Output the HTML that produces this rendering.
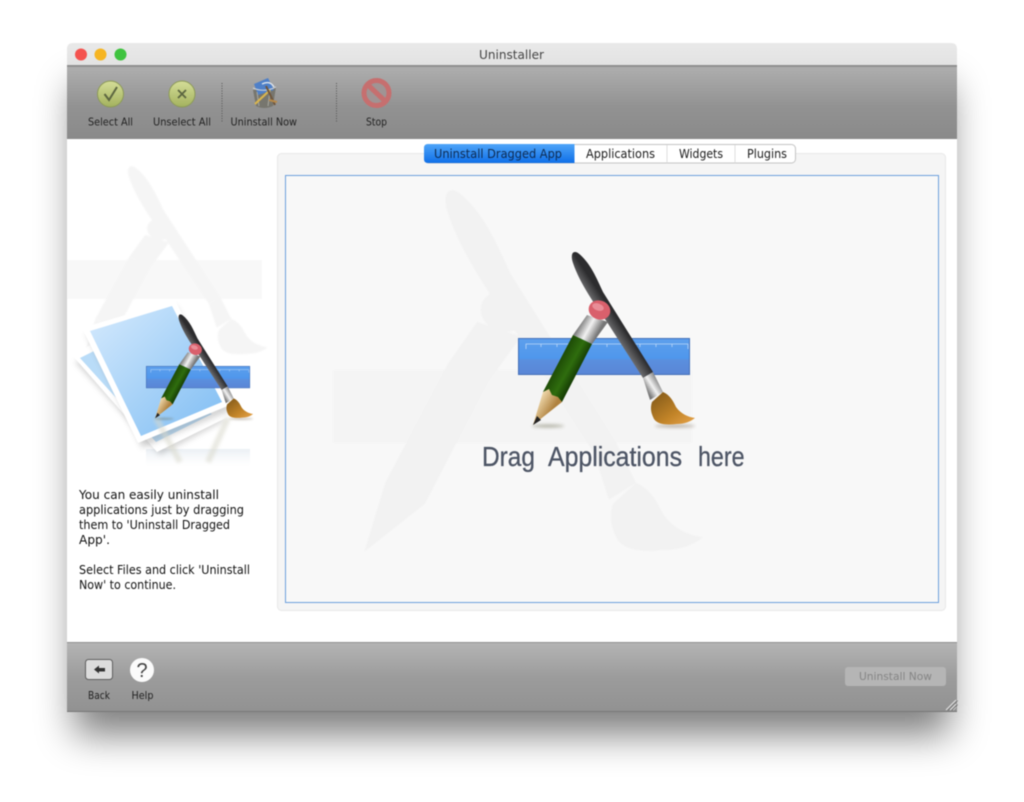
<!DOCTYPE html>
<html>
<head>
<meta charset="utf-8">
<title>Uninstaller</title>
<style>
html,body{margin:0;padding:0;background:#fff;width:1024px;height:802px;overflow:hidden}
svg{display:block;filter:blur(.4px)}
text{font-family:"DejaVu Sans","Liberation Sans",sans-serif}
</style>
</head>
<body>
<svg width="1024" height="802" viewBox="0 0 1024 802" xmlns="http://www.w3.org/2000/svg">
<defs>
  <filter id="sh" x="-20%" y="-20%" width="140%" height="140%"><feGaussianBlur stdDeviation="19"/></filter>
  <filter id="soft" x="-50%" y="-200%" width="200%" height="500%"><feGaussianBlur stdDeviation="1.600"/></filter>
  <filter id="soft3" x="-30%" y="-30%" width="160%" height="160%"><feGaussianBlur stdDeviation="3"/></filter>
  <filter id="g1" x="-10%" y="-10%" width="120%" height="120%"><feGaussianBlur stdDeviation=".8"/></filter>
  <linearGradient id="tb" x1="0" y1="0" x2="0" y2="1"><stop offset="0" stop-color="#e9e9e9"/><stop offset="1" stop-color="#cdcdcd"/></linearGradient>
  <linearGradient id="tool" x1="0" y1="0" x2="0" y2="1"><stop offset="0" stop-color="#aeaeae"/><stop offset=".55" stop-color="#929292"/><stop offset="1" stop-color="#8a8a8a"/></linearGradient>
  <linearGradient id="bot" x1="0" y1="0" x2="0" y2="1"><stop offset="0" stop-color="#b4b4b4"/><stop offset=".5" stop-color="#9c9c9c"/><stop offset="1" stop-color="#929292"/></linearGradient>
  <linearGradient id="sel" x1="0" y1="0" x2="0" y2="1"><stop offset="0" stop-color="#4fa5f8"/><stop offset="1" stop-color="#0f6fe8"/></linearGradient>
  <linearGradient id="grn" x1="0" y1="0" x2="0" y2="1"><stop offset="0" stop-color="#d5dd98"/><stop offset="1" stop-color="#a3b25e"/></linearGradient>
  <linearGradient id="rul" x1="0" y1="0" x2="0" y2="1"><stop offset="0" stop-color="#5d9fec"/><stop offset=".55" stop-color="#4f97ec"/><stop offset=".6" stop-color="#5a8fde"/><stop offset="1" stop-color="#5a86d6"/></linearGradient>
  <linearGradient id="hand" gradientUnits="userSpaceOnUse" x1="592" y1="320" x2="610" y2="308"><stop offset="0" stop-color="#303032"/><stop offset=".45" stop-color="#707072"/><stop offset="1" stop-color="#2c2c2e"/></linearGradient>
  <linearGradient id="silv1" gradientUnits="userSpaceOnUse" x1="646" y1="390" x2="660" y2="381"><stop offset="0" stop-color="#777"/><stop offset=".45" stop-color="#f2f2f2"/><stop offset="1" stop-color="#777"/></linearGradient>
  <linearGradient id="silv2" gradientUnits="userSpaceOnUse" x1="580" y1="323" x2="598" y2="333"><stop offset="0" stop-color="#777"/><stop offset=".5" stop-color="#f2f2f2"/><stop offset="1" stop-color="#777"/></linearGradient>
  <linearGradient id="hair" x1="0" y1="0" x2="1" y2="1"><stop offset="0" stop-color="#7d5618"/><stop offset=".6" stop-color="#c28428"/><stop offset="1" stop-color="#e8a44a"/></linearGradient>
  <linearGradient id="pen" gradientUnits="userSpaceOnUse" x1="558" y1="362" x2="578" y2="373"><stop offset="0" stop-color="#1d4a06"/><stop offset=".55" stop-color="#2f6d0e"/><stop offset="1" stop-color="#143a03"/></linearGradient>
  <linearGradient id="wood" gradientUnits="userSpaceOnUse" x1="536" y1="400" x2="552" y2="410"><stop offset="0" stop-color="#f6e2b8"/><stop offset="1" stop-color="#b0823f"/></linearGradient>
  <linearGradient id="paper" x1="0" y1="0" x2="1" y2="1"><stop offset="0" stop-color="#d5eafd"/><stop offset="1" stop-color="#7fbdf3"/></linearGradient>
  <linearGradient id="fade" x1="0" y1="0" x2="0" y2="1"><stop offset="0" stop-color="#e6ecf2" stop-opacity=".8"/><stop offset="1" stop-color="#f2f5f8" stop-opacity="0"/></linearGradient>

  <g id="shapes">
    <path d="M573,263C570,254 573,250 578,253C590,262 597,279 603,292L653,372L643,378L607,322C596,306 580,284 573,263Z"/>
    <path d="M643,378L653,372L663,392L650,400Z"/>
    <path d="M652,402L663,392C670,395 673,401 676,407C681,414 688,417 695,418C690,422 684,424 677,424C668,425 658,425 654,419C651,413 650,408 652,402Z"/>
    <path d="M587,315L608,322L592,344L573,335Z"/>
    <ellipse cx="599.500" cy="310" rx="11" ry="9.500" transform="rotate(20 599.500 310)"/>
    <path d="M573,335L592,344L562,402L543,392Z"/>
    <path d="M543,392L562,402L538,421L533,425Z"/>
  </g>

  <g id="icon">
    <rect x="518.500" y="338.500" width="171" height="36" fill="url(#rul)" stroke="#4470b8" stroke-width="1"/>
    <path d="M526,349V344H688V349M541,344v3M557,344v3M574,344v3M590,344v3M607,344v3M623,344v3M640,344v3M656,344v3M672,344v3" fill="none" stroke="#bcd8f8" stroke-width=".8"/>
    <ellipse cx="548" cy="426" rx="16" ry="1.500" fill="#6a6a50" opacity=".5" filter="url(#soft)"/>
    <ellipse cx="675" cy="426" rx="20" ry="1.500" fill="#6a5a40" opacity=".45" filter="url(#soft)"/>
    <path d="M573,263C570,254 573,250 578,253C590,262 597,279 603,292L653,372L643,378L607,322C596,306 580,284 573,263Z" fill="url(#hand)"/>
    <path d="M643,378L653,372L663,392L650,400Z" fill="url(#silv1)"/>
    <path d="M652,402L663,392C670,395 673,401 676,407C681,414 688,417 695,418C690,422 684,424 677,424C668,425 658,425 654,419C651,413 650,408 652,402Z" fill="url(#hair)"/>
    <path d="M587,315L608,322L592,344L573,335Z" fill="url(#silv2)"/>
    <path d="M573,335L592,344L562,402L543,392Z" fill="url(#pen)"/>
    <path d="M543,392L549,389L552,395L558,397L562,402L538,421L533,425Z" fill="url(#wood)"/>
    <path d="M537,416L541,420L533,425Z" fill="#222"/>
    <ellipse cx="599.500" cy="310" rx="11" ry="9.500" transform="rotate(20 599.500 310)" fill="#d9606c"/>
    <ellipse cx="598" cy="307" rx="6" ry="3.500" transform="rotate(20 598 307)" fill="#e98d97"/>
  </g>
</defs>

<!-- window shadow -->
<rect x="74" y="85" width="876" height="650" fill="#000" opacity=".5" filter="url(#sh)"/>

<!-- window -->
<path d="M67,139V49Q67,43 73,43H951Q957,43 957,49V139Z" fill="url(#tb)"/>
<rect x="67" y="65" width="890" height="2" fill="#8f8f8f"/>
<rect x="67" y="67" width="890" height="72" fill="url(#tool)"/>
<rect x="67" y="139" width="890" height="504" fill="#fff"/>
<rect x="67" y="642" width="890" height="1" fill="#909090"/>
<rect x="67" y="643" width="890" height="68" fill="url(#bot)"/>
<rect x="67" y="711" width="890" height="1" fill="#777"/>

<!-- traffic lights -->
<circle cx="81" cy="54.500" r="6" fill="#f4534f"/>
<circle cx="100.500" cy="54.500" r="6" fill="#f6b522"/>
<circle cx="120.500" cy="54.500" r="6" fill="#3fc33f"/>
<text x="479" y="59" font-size="12.500" fill="#444" textLength="65" lengthAdjust="spacingAndGlyphs">Uninstaller</text>

<!-- toolbar icons -->
<circle cx="110.500" cy="94" r="13" fill="url(#grn)" stroke="#8c9a58" stroke-width="1"/>
<path d="M104.500,94L109,100L117,87" fill="none" stroke="#5c6640" stroke-width="2"/>
<circle cx="182" cy="94" r="13" fill="url(#grn)" stroke="#8c9a58" stroke-width="1"/>
<path d="M178,90L186,98M186,90L178,98" fill="none" stroke="#5c6640" stroke-width="1.800"/>
<line x1="222" y1="83" x2="222" y2="122" stroke="#555" stroke-width="1" stroke-dasharray="1 1.500"/>
<line x1="336.500" y1="83" x2="336.500" y2="122" stroke="#555" stroke-width="1" stroke-dasharray="1 1.500"/>
<!-- trash -->
<path d="M253,90L276,87L273,106Q264,110 256,106Z" fill="#77766e"/>
<path d="M254,84L268,78L274,90L258,95Z" fill="#4f80c8"/>
<path d="M262,84Q270,80 274,87" fill="none" stroke="#dfe6ee" stroke-width="1.400"/>
<path d="M253,88Q264,93 276,87" fill="none" stroke="#cfd4da" stroke-width="1"/>
<path d="M257,92L259,106M270,91L268,106" stroke="#a8a8a0" stroke-width="1"/>
<path d="M255,104L270,90" stroke="#d9b54e" stroke-width="2.200"/>
<path d="M266,86L275,105" stroke="#70563c" stroke-width="2"/>
<path d="M269,100L277,102" stroke="#b88a4a" stroke-width="2"/>
<!-- stop -->
<circle cx="376.500" cy="93" r="12.500" fill="#a09494" stroke="#c66f6f" stroke-width="5"/>
<path d="M367,84L386,102" stroke="#c66f6f" stroke-width="5"/>

<g fill="#222" font-size="10.500">
<text x="88" y="125.500" textLength="45" lengthAdjust="spacingAndGlyphs">Select All</text>
<text x="153" y="125.500" textLength="58" lengthAdjust="spacingAndGlyphs">Unselect All</text>
<text x="230.500" y="125.500" textLength="66.500" lengthAdjust="spacingAndGlyphs">Uninstall Now</text>
<text x="366" y="125.500" textLength="21" lengthAdjust="spacingAndGlyphs">Stop</text>
</g>

<!-- left ghost -->
<clipPath id="cl"><rect x="67" y="139" width="205" height="300"/></clipPath>
<g clip-path="url(#cl)" filter="url(#g1)">
  <rect x="67" y="260" width="195" height="39" fill="#f8f8f8"/>
  <g transform="translate(67 260) scale(1.134 1.09) translate(-518 -338)" fill="#f5f5f5"><use href="#shapes"/></g>
</g>

<!-- left paper icon -->
<rect x="146" y="449" width="104" height="17" fill="url(#fade)"/>
<path d="M75,362L103,347L226,420L160,455Z" fill="#888" opacity=".35" filter="url(#soft3)"/>
<path d="M72,355L100,340L228,417L157,452Z" fill="#fff"/>
<path d="M80,358L104,346L212,414L156,442Z" fill="#b9dcf8"/>
<path d="M86,334L176,306L232,410L142,448Z" fill="#777" opacity=".3" filter="url(#soft3)"/>
<path d="M82,328L175,300L230,405L138,443Z" fill="#fff"/>
<path d="M90,331L172,306L222,402L141,436Z" fill="url(#paper)"/>
<path d="M156,418L180,462M228,418L208,462" stroke="#d9d9cc" stroke-width="6" opacity=".55" filter="url(#soft)"/>
<g transform="translate(146 366) scale(.605 .6) translate(-518 -338)"><use href="#icon"/></g>

<!-- left text -->
<g fill="#111" font-size="12">
<text x="79" y="499" textLength="140" lengthAdjust="spacingAndGlyphs">You can easily uninstall</text>
<text x="79" y="514" textLength="165" lengthAdjust="spacingAndGlyphs">applications just by dragging</text>
<text x="79" y="529" textLength="151" lengthAdjust="spacingAndGlyphs">them to 'Uninstall Dragged</text>
<text x="79" y="544" textLength="31" lengthAdjust="spacingAndGlyphs">App'.</text>
<text x="79" y="574" textLength="171" lengthAdjust="spacingAndGlyphs">Select Files and click 'Uninstall</text>
<text x="79" y="589" textLength="97" lengthAdjust="spacingAndGlyphs">Now' to continue.</text>
</g>

<!-- panel -->
<rect x="277.500" y="153.500" width="668" height="457" rx="4" fill="#f5f5f5" stroke="#e8e8e8"/>
<rect x="285.500" y="175.500" width="653" height="427" fill="#f8f8f8" stroke="#6d9fdc"/>
<g filter="url(#g1)">
  <rect x="333" y="370" width="359" height="73" fill="#f4f4f4"/>
  <g transform="translate(333 370) scale(2.09 2.09) translate(-518 -338)" fill="#f2f2f2"><use href="#shapes"/></g>
</g>
<use href="#icon"/>
<g fill="#4d5565" stroke="#4d5565" stroke-width=".3" font-size="28">
<text x="482" y="466" textLength="53" lengthAdjust="spacingAndGlyphs" style="font-family:'Liberation Sans',sans-serif">Drag</text>
<text x="548" y="466" textLength="134" lengthAdjust="spacingAndGlyphs" style="font-family:'Liberation Sans',sans-serif">Applications</text>
<text x="698" y="466" textLength="46.500" lengthAdjust="spacingAndGlyphs" style="font-family:'Liberation Sans',sans-serif">here</text>
</g>

<!-- tabs -->
<rect x="424.500" y="144.500" width="371" height="18.500" rx="4" fill="#fff" stroke="#c4c4c4"/>
<path d="M574.500,144H428Q424,144 424,148V159Q424,163 428,163H574.500Z" fill="url(#sel)"/>
<path d="M667,145V163M735,145V163" stroke="#dedede"/>
<g font-size="12" fill="#1a1a1a">
<text x="434" y="158" fill="#0d2a50" textLength="128" lengthAdjust="spacingAndGlyphs">Uninstall Dragged App</text>
<text x="586" y="158" textLength="69" lengthAdjust="spacingAndGlyphs">Applications</text>
<text x="679" y="158" textLength="44" lengthAdjust="spacingAndGlyphs">Widgets</text>
<text x="747" y="158" textLength="40" lengthAdjust="spacingAndGlyphs">Plugins</text>
</g>

<!-- bottom bar -->
<rect x="85.500" y="659.500" width="27" height="20" rx="3" fill="#dcdcdc" stroke="#5e5e5e"/>
<path d="M94,669.500L99,665.500V668H105V671.500H99V673.500Z" fill="#333"/>
<circle cx="142" cy="670" r="12" fill="#fbfbfb"/>
<text x="136.500" y="677" font-size="20" fill="#444" style="font-family:'Liberation Sans',sans-serif">?</text>
<g font-size="10.500" fill="#222">
<text x="88" y="699" textLength="22" lengthAdjust="spacingAndGlyphs">Back</text>
<text x="131.500" y="699" textLength="22" lengthAdjust="spacingAndGlyphs">Help</text>
</g>
<rect x="845" y="667" width="101" height="19" rx="3" fill="#b5b5b5"/>
<text x="859" y="680" font-size="10.500" fill="#858585" textLength="73" lengthAdjust="spacingAndGlyphs">Uninstall Now</text>
<path d="M946,710L956,700M950,710L956,704M953,710L956,707" stroke="#e4e4e4" stroke-width="1"/>
<path d="M947,710L957,700M951,710L957,704" stroke="#666" stroke-width=".6" transform="translate(.8 .6)"/>
</svg>
</body>
</html>
